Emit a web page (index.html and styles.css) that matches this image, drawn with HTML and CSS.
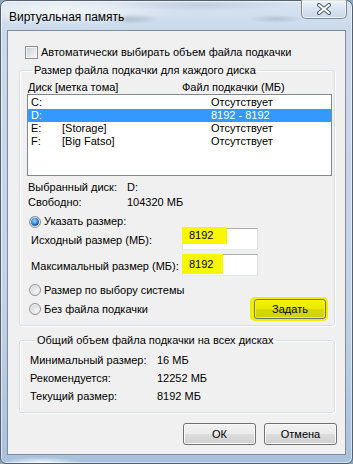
FILE: index.html
```html
<!DOCTYPE html>
<html lang="ru">
<head>
<meta charset="utf-8">
<title>Виртуальная память</title>
<link rel="stylesheet" href="styles.css">
</head>
<body>
<div class="window">
  <div class="titlebar">
    <span class="title">Виртуальная память</span>
    <div class="close">
      <svg width="16" height="12" viewBox="0 0 16 12">
        <path d="M3 2 L13 10 M13 2 L3 10" stroke="#4f5b69" stroke-width="4" stroke-linecap="round" fill="none"/>
        <path d="M3 2 L13 10 M13 2 L3 10" stroke="#ffffff" stroke-width="2" stroke-linecap="round" fill="none"/>
      </svg>
    </div>
  </div>
  <div class="client">
    <div class="check-row"><span class="checkbox"></span><span>Автоматически выбирать объем файла подкачки</span></div>

    <fieldset class="group g1">
      <legend>Размер файла подкачки для каждого диска</legend>
      <div class="list-head"><span class="hc1">Диск [метка тома]</span><span>Файл подкачки (МБ)</span></div>
      <div class="list">
        <div class="row"><span class="drv">C:</span><span class="lbl"></span><span class="val">Отсутствует</span></div>
        <div class="row sel"><span class="drv">D:</span><span class="lbl"></span><span class="val">8192 - 8192</span></div>
        <div class="row"><span class="drv">E:</span><span class="lbl">[Storage]</span><span class="val">Отсутствует</span></div>
        <div class="row"><span class="drv">F:</span><span class="lbl">[Big Fatso]</span><span class="val">Отсутствует</span></div>
      </div>
      <div class="info"><span class="key">Выбранный диск:</span><span>D:</span></div>
      <div class="info"><span class="key">Свободно:</span><span>104320 МБ</span></div>
      <div class="radio-row r1"><span class="radio on"></span><span>Указать размер:</span></div>
      <div class="field-row"><span class="flabel">Исходный размер (МБ):</span><div class="input"><span class="mark m1">8192</span></div></div>
      <div class="field-row f2"><span class="flabel">Максимальный размер (МБ):</span><div class="input"><span class="mark m2">8192</span></div></div>
      <div class="radio-row r2"><span class="radio"></span><span>Размер по выбору системы</span></div>
      <div class="last-row">
        <div class="radio-row"><span class="radio"></span><span>Без файла подкачки</span></div>
        <button class="btn set">Задать</button>
      </div>
    </fieldset>

    <fieldset class="group g2">
      <legend>Общий объем файла подкачки на всех дисках</legend>
      <div class="total"><span class="tkey">Минимальный размер:</span><span>16 МБ</span></div>
      <div class="total"><span class="tkey">Рекомендуется:</span><span>12252 МБ</span></div>
      <div class="total"><span class="tkey">Текущий размер:</span><span>8192 МБ</span></div>
    </fieldset>

    <div class="buttons">
      <button class="btn">ОК</button>
      <button class="btn">Отмена</button>
    </div>
  </div>
</div>
</body>
</html>
```

FILE: styles.css
```css
* { box-sizing: border-box; }
html, body { margin: 0; padding: 0; }
body {
  width: 353px;
  height: 464px;
  overflow: hidden;
  background: #8fa6bf;
  font-family: "Liberation Sans", Arial, sans-serif;
  font-size: 11px;
  color: #000;
  white-space: nowrap;
}

.window {
  width: 353px;
  height: 464px;
  border: 1px solid #55606e;
  border-radius: 7px 7px 6px 6px;
  padding: 0 6px 8px 6px;
  background:
    radial-gradient(ellipse 30px 5px at 130px 18px, rgba(120,130,145,0.35), rgba(120,130,145,0) 100%),
    radial-gradient(ellipse 28px 4px at 275px 18px, rgba(120,130,145,0.3), rgba(120,130,145,0) 100%),
    radial-gradient(ellipse 90px 6px at 200px 4px, rgba(140,150,165,0.25), rgba(140,150,165,0) 100%),
    radial-gradient(ellipse 120px 14px at 60px 10px, rgba(255,255,255,0.7), rgba(255,255,255,0) 100%),
    radial-gradient(ellipse 40px 6px at 40px 462px, rgba(255,255,255,0.9), rgba(255,255,255,0) 100%),
    linear-gradient(to bottom, #d7e3f1 0px, #cad9ea 30px, #c3d3e6 300px, #a9c1dc 100%);
  box-shadow: inset 1px 1px 0 rgba(255,255,255,0.6), inset -1px -1px 0 rgba(255,255,255,0.5);
  display: flex;
  flex-direction: column;
}

.titlebar {
  height: 29px;
  display: flex;
  align-items: flex-start;
  padding-left: 2px;
}
.title {
  margin-top: 8px;
  line-height: 16px;
  font-size: 12px;
  color: #000;
  text-shadow: 0 0 6px rgba(255,255,255,0.9);
}
.close {
  margin-left: auto;
  margin-right: -1px;
  margin-top: -1px;
  width: 46px;
  height: 19px;
  border: 1px solid #7d8898;
  border-top: none;
  border-radius: 0 0 5px 5px;
  background: linear-gradient(to bottom, rgba(255,255,255,0.55), rgba(220,230,242,0.6) 50%, rgba(200,214,232,0.7));
  box-shadow: inset 0 0 0 1px rgba(255,255,255,0.6);
  display: flex;
  align-items: center;
  justify-content: center;
}

.client {
  flex: 1;
  background: #f0f0f0;
  border: 1px solid #7f8b99;
  padding: 14px 8px 9px 0;
  display: flex;
  flex-direction: column;
}

.check-row {
  height: 15px;
  display: flex;
  align-items: center;
  padding-left: 17px;
  gap: 3px;
  line-height: 15px;
}
.checkbox {
  flex: none;
  width: 13px;
  height: 13px;
  border: 1px solid #8e8f8f;
  background: linear-gradient(135deg, #c9ccd1 0%, #e4e6e9 55%, #f7f7f7 100%);
  box-shadow: inset 0 0 0 1px #f4f4f4;
}

.group {
  margin: 2px 0 0 11px;
  width: 316px;
  border: 1px solid #d5dfe5;
  border-radius: 3px;
  padding: 2px 8px 5px 7px;
  min-width: 0;
  box-shadow: inset 1px 1px 0 #ffffff, 1px 1px 0 #ffffff;
}
.group legend {
  padding: 0 2px;
  margin-left: 5px;
  line-height: 16px;
  height: 16px;
}

.list-head {
  display: flex;
  height: 14px;
  line-height: 14px;
  padding-left: 1px;
}
.hc1 { width: 154px; flex: none; }

.list {
  width: 305px;
  height: 82px;
  border: 1px solid #828790;
  background: #fff;
  padding-top: 1px;
}
.row {
  display: flex;
  height: 13px;
  line-height: 13px;
  padding-left: 3px;
}
.row.sel { background: #3399ff; color: #fff; }
.drv { width: 31px; flex: none; }
.lbl { width: 149px; flex: none; }

.info {
  display: flex;
  height: 15px;
  line-height: 15px;
  padding-left: 1px;
}
.list + .info { margin-top: 4px; }
.key { width: 99px; flex: none; }

.radio-row {
  display: flex;
  align-items: center;
  gap: 3px;
  height: 13px;
  line-height: 13px;
  padding-left: 2px;
}
.r1 { margin-top: 5px; }
.r2 { margin-top: 7px; height: 14px; }
.radio {
  width: 12px;
  height: 12px;
  border-radius: 50%;
  border: 1px solid #8e8f8f;
  background: radial-gradient(circle at 65% 65%, #f5f5f5 0%, #dcdde0 60%, #c4c7cc 100%);
  box-shadow: inset 0 0 0 1px #f2f2f2;
  flex: none;
}
.radio.on {
  background:
    radial-gradient(circle at 45% 40%, #9fd8ff 0%, #3a8fd8 35%, #1c4f94 60%, rgba(0,0,0,0) 62%),
    radial-gradient(circle at 65% 65%, #f5f5f5 0%, #dcdde0 60%, #c4c7cc 100%);
}

.field-row {
  display: flex;
  align-items: center;
  height: 22px;
  padding-left: 4px;
}
.f2 { margin-top: 4px; }
.flabel { width: 151px; flex: none; padding-top: 2px; }
.input {
  flex: none;
  width: 76px;
  height: 22px;
  background: #fff;
  border: 1px solid #dbdfe6;
  border-top-color: #abadb3;
  border-bottom-color: #e3e9ef;
}
.mark {
  display: block;
  margin: -2px 0 0 -1px;
  height: 17px;
  line-height: 17px;
  background: #f7f700;
  padding-left: 7px;
}
.m1 { width: 45px; }
.m2 { width: 41px; margin-top: -1px; height: 20px; line-height: 20px; }

.last-row {
  margin-top: 1px;
  height: 22px;
  display: flex;
  align-items: center;
  justify-content: space-between;
}

.btn {
  font-family: inherit;
  font-size: 11px;
  color: #000;
  height: 22px;
  border: 1px solid #707070;
  border-radius: 3px;
  background: linear-gradient(to bottom, #f2f2f2 0%, #ebebeb 50%, #dddddd 51%, #cfcfcf 100%);
  box-shadow: inset 0 0 0 1px #fbfbfb;
  padding: 0;
  line-height: 18px;
}
.btn.set {
  width: 72px;
  height: 20px;
  margin-right: 0;
  background: linear-gradient(to bottom, #f2f200 0%, #eaea00 50%, #dada00 51%, #d0d000 100%);
  box-shadow: inset 0 0 0 1px #f6f600, 0 0 0 2px #eeee00, -2px 0 0 2px #eeee00;
}

.g2 { margin-top: 6px; padding: 3px 8px 7px 10px; }
.total {
  display: flex;
  height: 18px;
  line-height: 18px;
}
.tkey { width: 127px; flex: none; }

.buttons {
  margin-top: 10px;
  display: flex;
  justify-content: flex-end;
  gap: 8px;
}
.buttons .btn { width: 73px; }
```
